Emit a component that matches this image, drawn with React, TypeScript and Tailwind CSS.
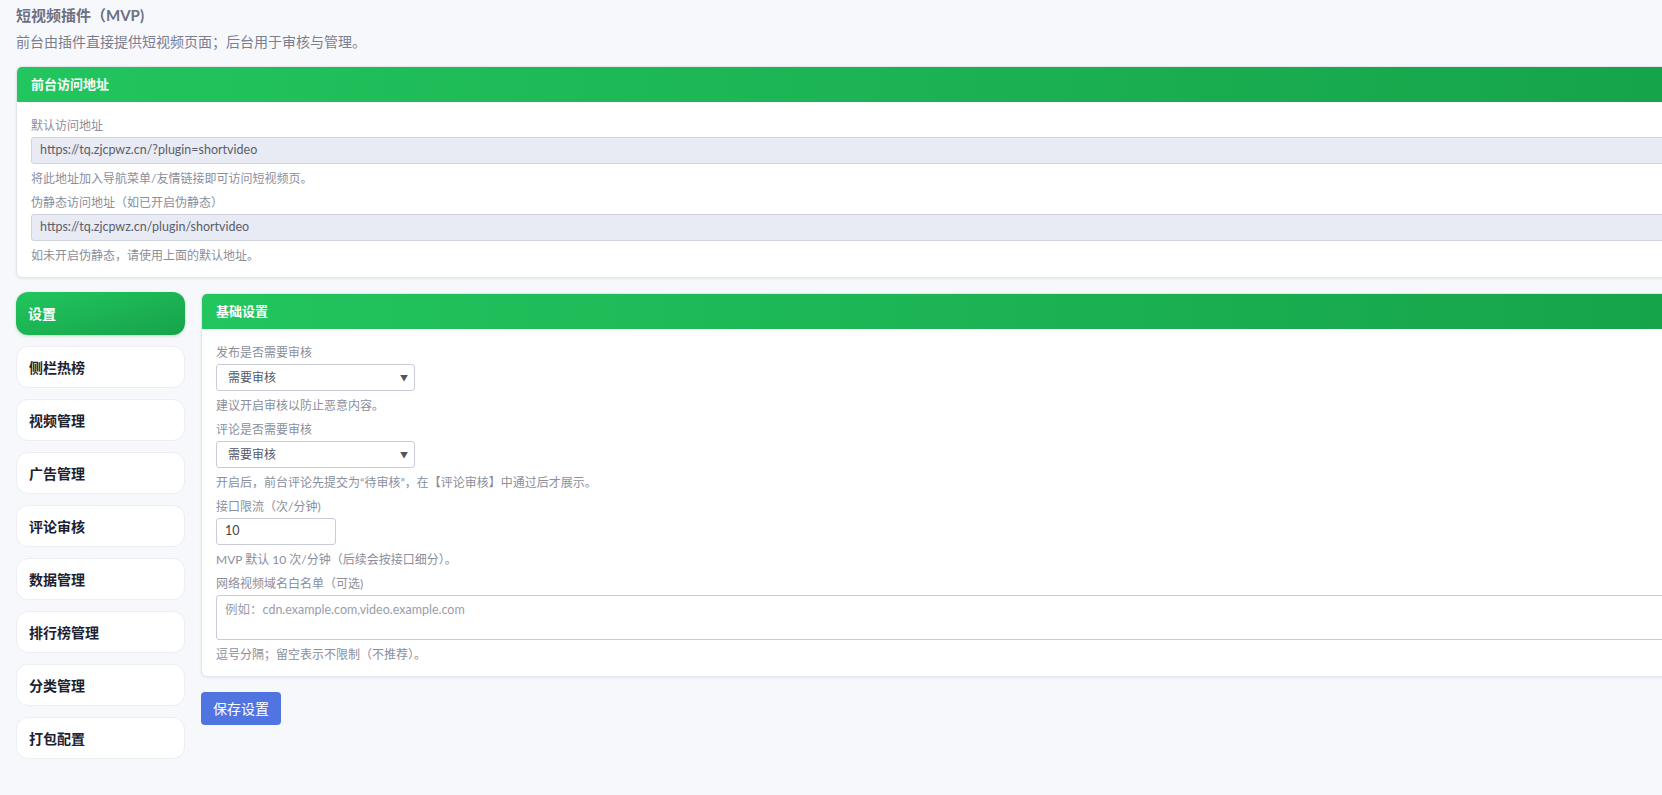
const font = { fontFamily: '"Lato", "Noto Sans CJK SC", sans-serif' };

const menu = ['设置', '侧栏热榜', '视频管理', '广告管理', '评论审核', '数据管理', '排行榜管理', '分类管理', '打包配置'];

function Card({ title, children }: { title: string; children: React.ReactNode }) {
  return (
    <div className="overflow-hidden rounded-md border border-[#e4e6ee] bg-white shadow-[0_1px_3px_rgba(30,40,80,0.08)]">
      <div className="flex h-[35px] items-center bg-linear-to-r from-[#22c55e] to-[#16a34a] px-[14px] text-[13px] font-bold text-white">
        {title}
      </div>
      <div className="px-[14px] pt-[15px] pb-[12px]">{children}</div>
    </div>
  );
}

function Field({ label, help, children, first }: { label: string; help: string; children: React.ReactNode; first?: boolean }) {
  return (
    <div className={first ? '' : 'mt-[6px]'}>
      <div className="mb-[2px] text-[12px] leading-[18px] text-[#8b8e9c]">{label}</div>
      {children}
      <div className="mt-[6px] text-[12px] leading-[18px] text-[#8b8e9c]">{help}</div>
    </div>
  );
}

function ReadonlyInput({ value }: { value: string }) {
  return (
    <div className="flex h-[27px] items-center rounded-[3px] border border-[#cfd2df] bg-[#e8ebf3] px-[8px] text-[12.5px] text-[#5a5e6e]">
      {value}
    </div>
  );
}

function Select({ value }: { value: string }) {
  return (
    <div className="flex h-[27px] w-[199px] items-center justify-between rounded-[3px] border border-[#c9cbd8] bg-white pr-[6px] pl-[11px] text-[12px] text-[#55596a]">
      <span>{value}</span>
      <span className="text-[8px] text-[#555]">▼</span>
    </div>
  );
}

export default function App() {
  return (
    <div className="min-h-screen w-screen overflow-hidden bg-[#f7f8fc]" style={font}>
      <div className="w-[1720px] px-4 pt-[5px] pb-10">
        <div className="text-[15px] leading-[20px] font-bold text-[#6c7082]">短视频插件（MVP)</div>
        <div className="mt-[7px] text-[14px] leading-[20px] text-[#7a7e8f]">前台由插件直接提供短视频页面；后台用于审核与管理。</div>

        <div className="mt-[14px]">
          <Card title="前台访问地址">
            <Field first label="默认访问地址" help="将此地址加入导航菜单/友情链接即可访问短视频页。">
              <ReadonlyInput value="https://tq.zjcpwz.cn/?plugin=shortvideo" />
            </Field>
            <Field label="伪静态访问地址（如已开启伪静态）" help="如未开启伪静态，请使用上面的默认地址。">
              <ReadonlyInput value="https://tq.zjcpwz.cn/plugin/shortvideo" />
            </Field>
          </Card>
        </div>

        <div className="mt-[14px] flex gap-4">
          <nav className="flex w-[169px] shrink-0 flex-col gap-[11px]">
            {menu.map((item, i) => (
              <div
                key={item}
                className={
                  i === 0
                    ? 'flex h-[43px] items-center rounded-xl bg-linear-to-br from-[#22c55e] to-[#16a34a] px-3 text-[14px] font-bold text-white shadow-[0_1px_3px_rgba(22,163,74,0.3)]'
                    : 'flex h-[42px] items-center rounded-xl border border-[#eceef4] bg-white px-3 text-[14px] font-bold text-[#1d2130]'
                }
              >
                {item}
              </div>
            ))}
          </nav>

          <div className="flex-1 pt-px">
            <Card title="基础设置">
              <Field first label="发布是否需要审核" help="建议开启审核以防止恶意内容。">
                <Select value="需要审核" />
              </Field>
              <Field label="评论是否需要审核" help="开启后，前台评论先提交为“待审核”，在【评论审核】中通过后才展示。">
                <Select value="需要审核" />
              </Field>
              <Field label="接口限流（次/分钟)" help="MVP 默认 10 次/分钟（后续会按接口细分）。">
                <div className="flex h-[27px] w-[120px] items-center rounded-[3px] border border-[#c9cbd8] bg-white px-[8px] text-[12.5px] text-[#444]">
                  10
                </div>
              </Field>
              <Field label="网络视频域名白名单（可选)" help="逗号分隔；留空表示不限制（不推荐）。">
                <div className="h-[45px] rounded-[3px] border border-[#c9cbd8] bg-white px-[8px] pt-[5px] text-[12.5px] text-[#9a9cab]">
                  例如：cdn.example.com,video.example.com
                </div>
              </Field>
            </Card>
            <button className="mt-[15px] h-[33px] rounded-[4px] bg-[#5074e0] px-3 text-[14px] text-white">保存设置</button>
          </div>
        </div>
      </div>
    </div>
  );
}
